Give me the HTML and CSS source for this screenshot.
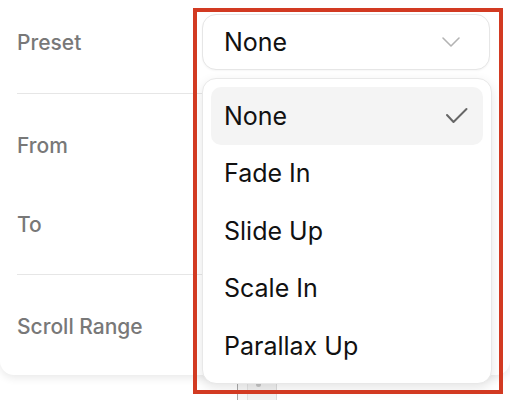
FILE: index.html
```html
<!DOCTYPE html>
<html lang="en">
<head>
<meta charset="utf-8">
<title>Preset</title>
<link rel="stylesheet" href="styles.css">
</head>
<body>
<div class="page">
  <div class="card">
    <section class="group">
      <div class="row">
        <span class="label">Preset</span>
        <button class="select" type="button">
          <span class="select-value">None</span>
          <svg class="chevron" width="20" height="12" viewBox="0 0 20 12"><path d="M2 2 L10 10 L18 2" fill="none" stroke="#b3b3b3" stroke-width="1.6" stroke-linecap="round" stroke-linejoin="round"/></svg>
        </button>
      </div>
    </section>
    <section class="group">
      <div class="row"><span class="label">From</span></div>
      <div class="row"><span class="label">To</span></div>
    </section>
    <section class="group last">
      <div class="row"><span class="label">Scroll Range</span></div>
    </section>
  </div>
  <div class="track"><div class="track-inner"><span class="track-dot"></span></div></div>

  <ul class="menu">
    <li class="item selected"><span>None</span>
      <svg class="check" width="24" height="18" viewBox="0 0 24 18"><path d="M2 8 L8.5 15 L21.5 2" fill="none" stroke="#666" stroke-width="2" stroke-linecap="round" stroke-linejoin="round"/></svg>
    </li>
    <li class="item"><span>Fade In</span></li>
    <li class="item"><span>Slide Up</span></li>
    <li class="item"><span>Scale In</span></li>
    <li class="item"><span>Parallax Up</span></li>
  </ul>
  <div class="annotation"></div>
</div>
</body>
</html>
```
FILE: styles.css
```css
html, body {
  margin: 0;
  padding: 0;
  background: #fff;
  width: 510px;
  height: 400px;
  overflow: hidden;
  font-family: Inter, "Noto Sans", sans-serif;
}

.page {
  position: relative;
  width: 510px;
  height: 400px;
}

.card {
  position: relative;
  z-index: 1;
  width: 510px;
  background: #fff;
  border-radius: 0 0 14px 14px;
  box-shadow: 0 3px 8px rgba(0, 0, 0, 0.09);
}

.group {
  margin: 0 20px 0 17px;
  padding: 23px 0 22px;
  display: flex;
  flex-direction: column;
  gap: 23px;
  border-top: 1px solid #e6e6e6;
}

.group:first-child {
  border-top: none;
  padding: 14px 0 23px;
}

.group.last {
  padding-bottom: 21px;
}

.row {
  height: 56px;
  display: grid;
  grid-template-columns: 185px 1fr;
  align-items: center;
}

.label {
  font-size: 21px;
  font-weight: 500;
  color: #787878;
}

.select {
  height: 56px;
  box-sizing: border-box;
  border: 1px solid #e6e6e6;
  border-radius: 14px;
  background: #fff;
  display: flex;
  align-items: center;
  justify-content: space-between;
  padding: 0 28px 0 21px;
  font-family: inherit;
  font-size: 25px;
  color: #111;
  box-shadow: 0 1px 2px rgba(0, 0, 0, 0.04);
}

.chevron {
  display: block;
}

.track {
  margin-left: 237px;
  width: 40px;
  height: 40px;
  margin-top: -15px;
  border-left: 1px solid #a8a8a8;
  box-sizing: border-box;
  background: #f7f7f7;
}

.track-inner {
  position: relative;
  margin-left: 9px;
  height: 100%;
  border-left: 1px solid #e2e2e2;
  border-right: 1px solid #dcdcdc;
  background: #f1f1f1;
}

.track-dot {
  position: absolute;
  left: 8px;
  top: 22px;
  width: 5px;
  height: 5px;
  border-radius: 50%;
  background: #c4c4c4;
}

.menu {
  position: absolute;
  z-index: 2;
  left: 202px;
  top: 78px;
  width: 290px;
  box-sizing: border-box;
  margin: 0;
  padding: 8px;
  list-style: none;
  background: #fff;
  border: 1px solid #e8e8e8;
  border-radius: 14px;
  box-shadow: 0 4px 12px rgba(0, 0, 0, 0.1);
}

.item {
  height: 57.5px;
  display: flex;
  align-items: center;
  justify-content: space-between;
  padding: 0 15px 0 13px;
  border-radius: 10px;
  font-size: 25px;
  color: #111;
}

.item.selected {
  background: #f4f4f4;
}

.check {
  display: block;
  margin-right: -1px;
}

.annotation {
  position: absolute;
  z-index: 3;
  left: 193px;
  top: 8px;
  width: 310px;
  height: 386px;
  box-sizing: border-box;
  border: 4px solid #d23a22;
  pointer-events: none;
}
```
